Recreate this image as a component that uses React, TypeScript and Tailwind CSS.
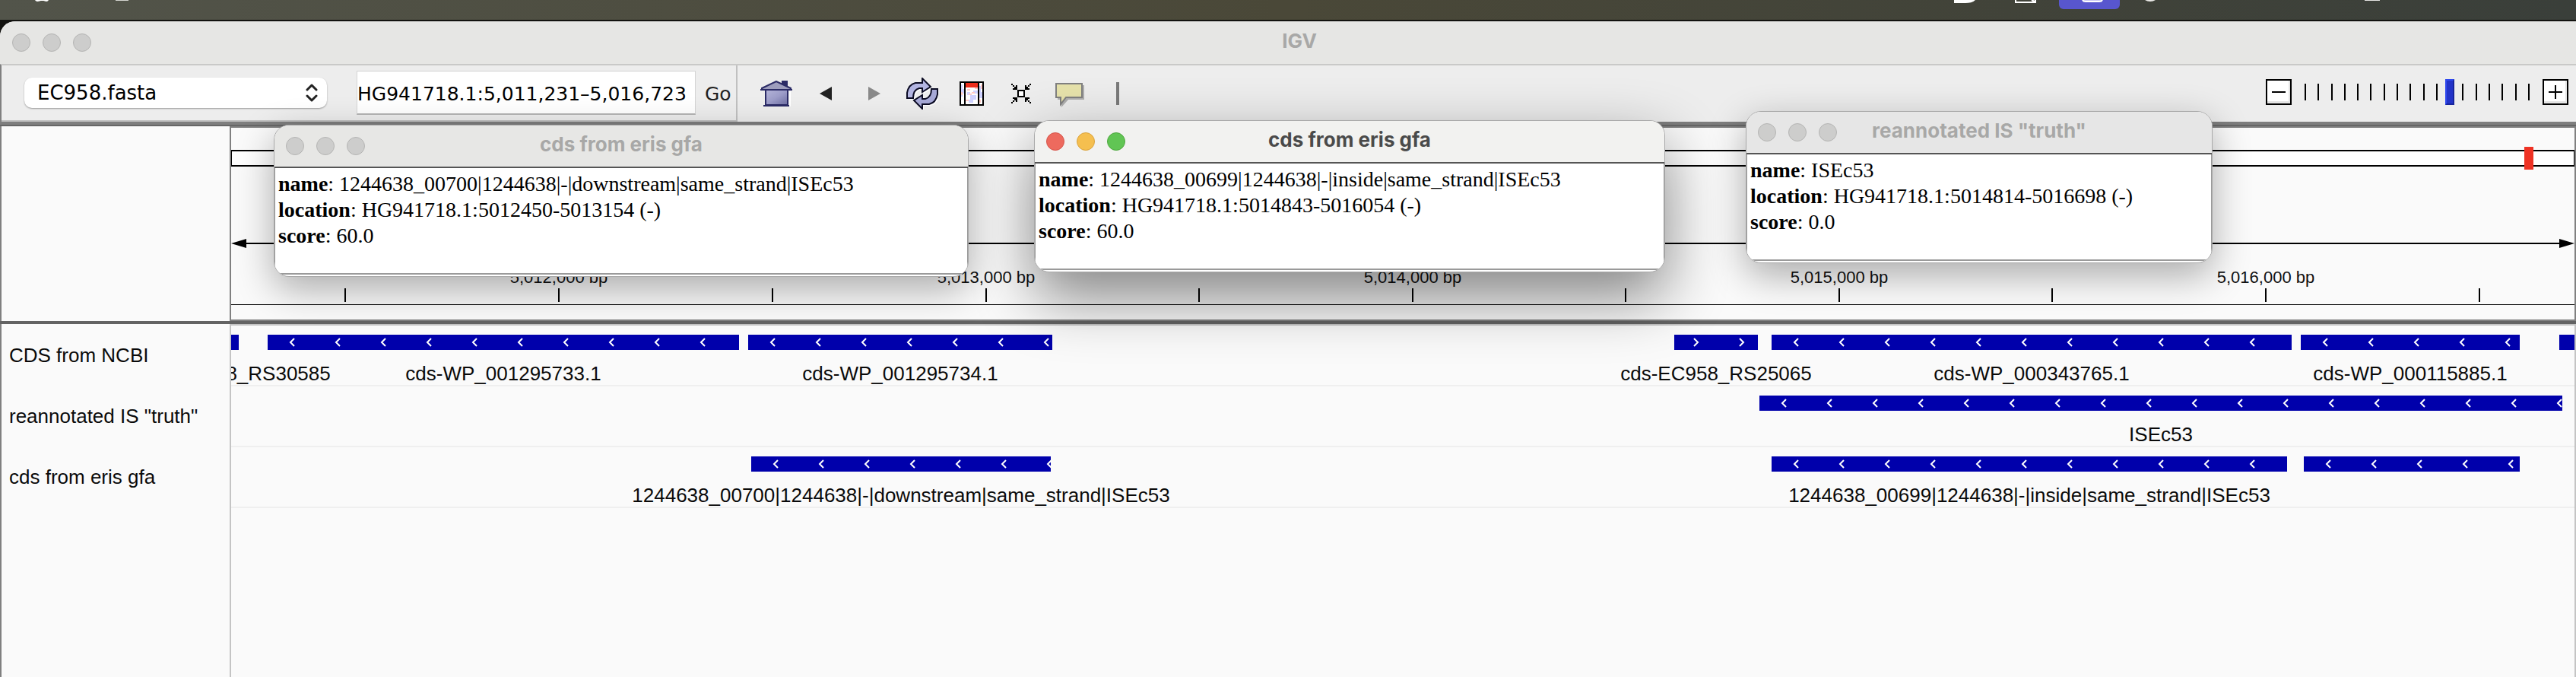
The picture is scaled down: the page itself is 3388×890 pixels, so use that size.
import React from "react";

const AXIS_WIDTH = 3082;
const pct = (value: number) => `${(value / AXIS_WIDTH) * 100}%`;

type Feature = { start: number; end: number; label?: string; forward?: boolean };

const TRACKS: { name: string; features: Feature[] }[] = [
  {
    name: "CDS from NCBI",
    features: [
      { start: 0, end: 10, label: "cds-EC958_RS30585" },
      { start: 48, end: 668, label: "cds-WP_001295733.1" },
      { start: 680, end: 1080, label: "cds-WP_001295734.1" },
      { start: 1898, end: 2008, label: "cds-EC958_RS25065", forward: true },
      { start: 2026, end: 2710, label: "cds-WP_000343765.1" },
      { start: 2722, end: 3010, label: "cds-WP_000115885.1" },
      { start: 3062, end: 3082 },
    ],
  },
  {
    name: 'reannotated IS "truth"',
    features: [{ start: 2010, end: 3066, label: "ISEc53" }],
  },
  {
    name: "cds from eris gfa",
    features: [
      { start: 684, end: 1078, label: "1244638_00700|1244638|-|downstream|same_strand|ISEc53" },
      { start: 2026, end: 2704, label: "1244638_00699|1244638|-|inside|same_strand|ISEc53" },
      { start: 2726, end: 3010 },
    ],
  },
];

const RULER: { at: number; label?: string }[] = [
  { at: 150 },
  { at: 431, label: "5,012,000 bp" },
  { at: 712 },
  { at: 993, label: "5,013,000 bp" },
  { at: 1273 },
  { at: 1554, label: "5,014,000 bp" },
  { at: 1834 },
  { at: 2115, label: "5,015,000 bp" },
  { at: 2395 },
  { at: 2676, label: "5,016,000 bp" },
  { at: 2957 },
];

function TrafficLights({ active = false }: { active?: boolean }) {
  const idle = "bg-[#cdcdcc] border-[#b4b4b3]";
  const tones = active
    ? ["bg-[#ed6a5e] border-[#d5554a]", "bg-[#f5bf4f] border-[#d9a33d]", "bg-[#61c554] border-[#4fa73f]"]
    : [idle, idle, idle];
  const names = ["Close", "Minimise", "Zoom"];
  return (
    <div className="flex gap-4">
      {tones.map((tone, i) => (
        <button key={names[i]} type="button" aria-label={names[i]} className={`size-6 rounded-full border ${tone}`} />
      ))}
    </div>
  );
}

function MenuBar() {
  return (
    <header className="h-7 shrink-0 border-b-2 border-[#12120f] bg-linear-to-r from-[#52544a] via-[#4a4838] to-[#3a3f3a]">
      <svg className="block h-[26px] w-full" aria-hidden="true">
        <path d="M46 0h18c-1 2-3 2.500-5 1.500c-2-.6-5-.6-7 0c-3 1-5 .3-6-1.500z" fill="#fff" />
        <rect x="152" width="17" height="1" fill="#d5d5d0" />
        <path d="M2570 0h28c-3 3-8 4-13 4h-15z" fill="#fff" />
        <path d="M2651 0v3h26v-3M2672 0l4 2" fill="none" stroke="#fff" strokeWidth="2" />
        <path d="M2708 0h80v6a6 6 0 0 1-6 6h-68a6 6 0 0 1-6-6z" fill="#5856ce" />
        <path d="M2739 0q1 2 4 2h18q3 0 4-2" fill="#c9c6f2" stroke="#fff" strokeWidth="2" />
        <path d="M2821 0h14q-3 2-7 2t-7-2z" fill="#e9e9e6" />
        <rect x="3110" width="20" height="1" fill="#e5e5e2" />
      </svg>
    </header>
  );
}

function HomeIcon() {
  return (
    <svg width="42" height="34" viewBox="0 0 42 34" aria-hidden="true">
      <defs>
        <linearGradient id="wall" x1="0" y1="0" x2="1" y2="1">
          <stop offset="0" stopColor="#b4b4d8" />
          <stop offset="0.5" stopColor="#9c9cc8" />
          <stop offset="1" stopColor="#6e6ea2" />
        </linearGradient>
      </defs>
      <path d="M38 14v20h2V14z" fill="#fff" />
      <path d="M28 0h8v10h-8z" fill="#2b2b66" />
      <path d="M7 12h29v20H7z" fill="url(#wall)" stroke="#2b2b66" strokeWidth="2" />
      <path d="M21 1L2 10v2h38v-2z" fill="#9d9dbd" stroke="#2b2b66" strokeWidth="2" />
      <path d="M0 11h42v2H0zM4 32h34v2H4z" fill="#2b2b66" />
    </svg>
  );
}

function RefreshIcon() {
  const arrow = "M1 27V20Q3 9 12 7H21V1L32 12L21 19V14H17Q9 16 9 27Z";
  return (
    <svg width="42" height="42" viewBox="0 0 42 42" aria-hidden="true">
      <path d={arrow} fill="#fff" transform="translate(2 2)" />
      <path d={arrow} fill="#fff" transform="rotate(180 22 22)" />
      <path d={arrow} fill="#b3b5e2" stroke="#0c0c24" strokeWidth="2" />
      <path d={arrow} fill="#a6a8d6" stroke="#0c0c24" strokeWidth="2" transform="rotate(180 21 21)" />
    </svg>
  );
}

function RegionIcon() {
  return (
    <svg width="32" height="32" viewBox="0 0 32 32" shapeRendering="crispEdges" aria-hidden="true">
      <path d="M0 0h32v32H0z" fill="#fff" />
      <path d="M2 4h2v6h2v6H4v4H2zM26 6h2v8h2v8h-4zM10 14h4v4h-4zM14 18h8v6h-4v4h-6v-4h2zM18 12h6v4h-6z" fill="#cfd2ff" />
      <path d="M2 14h2v4H2zM10 10h4v2h-4zM16 14h4v2h-4v2h-4v-2h4zM28 4h2v6h-2zM20 8h4v2h-4zM8 24h4v2H8zM26 24h2v4h-2z" fill="#ffc9c4" />
      <path d="M8 2h16v6H8z" fill="#ee2d1b" />
      <path d="M0 0h32v32H0zM2 2v28h4V2zM8 2v28h16V2zM26 2v28h4V2z" fill="#000" fillRule="evenodd" />
    </svg>
  );
}

function FitIcon() {
  return (
    <svg width="26" height="26" viewBox="0 0 26 26" shapeRendering="crispEdges" aria-hidden="true">
      <path d="M9 9h8v8H9z" fill="#fff" stroke="#000" strokeWidth="2" />
      {[0, 90, 180, 270].map((turn) => (
        <path key={turn} d="M0 0h2v2h2v2h2V2h2v6H2V6h2V4H2V2H0z" transform={`rotate(${turn} 13 13)`} />
      ))}
    </svg>
  );
}

function CommentIcon() {
  return (
    <svg width="38" height="32" viewBox="0 0 38 32" aria-hidden="true">
      <path d="M3 3h35v19H17l-9 10v-10H3z" fill="#aeaeae" />
      <path d="M1 1h34v18H14l-7 9v-9H1z" fill="#e6e2ab" stroke="#808080" strokeWidth="2" />
    </svg>
  );
}

function ToolButton({ label, className, children }: { label: string; className: string; children: React.ReactNode }) {
  return (
    <button type="button" aria-label={label} className={`flex shrink-0 items-center justify-center ${className}`}>
      {children}
    </button>
  );
}

function ZoomBox({ label, children }: { label: string; children: React.ReactNode }) {
  return (
    <button
      type="button"
      aria-label={label}
      className="flex size-[34px] items-center justify-center border-2 border-black bg-white shadow-[inset_-2px_-3px_0_#e4e4e4]"
    >
      <svg width="18" height="18" viewBox="0 0 18 18" aria-hidden="true">
        {children}
      </svg>
    </button>
  );
}

function Toolbar() {
  return (
    <div className="flex h-[76px] shrink-0 items-stretch border-t-2 border-l-2 border-t-[#c9c9c8] border-l-[#808080] bg-[#ededed]">
      <div className="flex w-[968px] shrink-0 items-center border-r-2 border-b-2 border-[#c0c0c0] pl-[30px]">
        <div className="relative w-[398px]">
          <select
            aria-label="Genome"
            className="h-10 w-full appearance-none rounded-[10px] bg-white pl-[17px] font-['DejaVu_Sans',sans-serif] text-[26px] leading-10 text-black shadow-[0_1px_2px_rgba(0,0,0,0.35)]"
          >
            <option>EC958.fasta</option>
          </select>
          <svg className="pointer-events-none absolute top-2 right-3 h-6 w-4" viewBox="0 0 16 24" fill="none" stroke="#222" strokeWidth="3" strokeLinecap="round" strokeLinejoin="round" aria-hidden="true">
            <path d="M2 8l6-6 6 6M2 16l6 6 6-6" />
          </svg>
        </div>
        <input
          aria-label="Locus"
          defaultValue="HG941718.1:5,011,231–5,016,723"
          className="ml-[39px] h-[58px] w-[446px] border border-[#d4d4d4] border-b-2 border-b-[#b5b5b5] bg-white pt-1 font-['DejaVu_Sans',sans-serif] text-[25px] text-black"
        />
        <button type="button" className="ml-3 pt-1 font-['DejaVu_Sans',sans-serif] text-[25px] text-[#222]">
          Go
        </button>
      </div>
      <div className="flex items-center pl-[30px]">
        <ToolButton label="Home" className="w-[42px]"><HomeIcon /></ToolButton>
        <ToolButton label="Back" className="ml-9 w-4">
          <svg width="16" height="18" viewBox="0 0 16 18" aria-hidden="true"><path d="M16 0v18L0 9z" fill="#222" /></svg>
        </ToolButton>
        <ToolButton label="Forward" className="ml-12 w-4">
          <svg width="16" height="18" viewBox="0 0 16 18" aria-hidden="true"><path d="M0 0v18l16-9z" fill="#898989" /></svg>
        </ToolButton>
        <ToolButton label="Refresh" className="ml-[34px] w-[42px]"><RefreshIcon /></ToolButton>
        <ToolButton label="Define a region of interest" className="ml-7 w-8"><RegionIcon /></ToolButton>
        <ToolButton label="Resize tracks to fit" className="ml-9 w-[26px]"><FitIcon /></ToolButton>
        <ToolButton label="Popup text behaviour" className="ml-8 w-[38px] pt-1"><CommentIcon /></ToolButton>
        <div className="ml-[42px] h-[30px] w-1 bg-[#7a7a7a]" />
      </div>
      <div className="ml-auto flex items-center pr-2.5 pb-1">
        <ZoomBox label="Zoom out"><path d="M0 8h18v2H0z" /></ZoomBox>
        <div className="relative mx-3 flex h-[34px] w-[306px] items-center">
          <div className="flex h-[22px] w-full justify-between px-[5px]">
            {Array.from({ length: 18 }, (_, i) => (
              <span key={i} className="w-0.5 bg-black" />
            ))}
          </div>
          <input
            type="range"
            aria-label="Zoom level"
            min={0}
            max={17}
            defaultValue={11}
            className="absolute inset-0 h-full w-full appearance-none bg-transparent [&::-webkit-slider-thumb]:h-[34px] [&::-webkit-slider-thumb]:w-3 [&::-webkit-slider-thumb]:appearance-none [&::-webkit-slider-thumb]:border-2 [&::-webkit-slider-thumb]:border-t-[#2f49ee] [&::-webkit-slider-thumb]:border-r-[#17249c] [&::-webkit-slider-thumb]:border-b-[#17249c] [&::-webkit-slider-thumb]:border-l-[#2f49ee] [&::-webkit-slider-thumb]:bg-[#2233c8]"
          />
        </div>
        <ZoomBox label="Zoom in"><path d="M0 8h8V0h2v8h8v2h-8v8H8v-8H0z" /></ZoomBox>
      </div>
    </div>
  );
}

function Ruler() {
  return (
    <div className="flex min-w-0 flex-1 flex-col border-2 border-[#808080] bg-[#fafafa] pt-[29px]">
      <div className="relative h-[22px] border-x border-y-2 border-black bg-white">
        <div className="absolute -top-1.5 h-[30px] w-3 bg-[#ee3224]" style={{ left: pct(3017) }} />
      </div>
      <div className="mt-[94px] flex h-3.5 items-center">
        <svg width="20" height="12" viewBox="0 0 20 12" aria-hidden="true"><path d="M0 6L20 0v12z" /></svg>
        <div className="h-0.5 flex-1 bg-black" />
        <svg width="20" height="12" viewBox="0 0 20 12" aria-hidden="true"><path d="M20 6L0 0v12z" /></svg>
      </div>
      <div className="relative mt-6 h-[50px] border-b border-black">
        {RULER.map((tick) => (
          <div key={tick.at} className="absolute top-0 flex h-[46px] w-0.5 flex-col items-center justify-end" style={{ left: pct(tick.at - 1) }}>
            <span className="text-[22px] leading-7 whitespace-nowrap text-[#111]">{tick.label}</span>
            <span className="h-[18px] w-0.5 bg-black" />
          </div>
        ))}
      </div>
    </div>
  );
}

function TrackRow({ features }: { features: Feature[] }) {
  return (
    <div className="relative h-20 overflow-hidden border-b-2 border-[#efefef]">
      {features.map((f) => (
        <div
          key={f.start}
          className="absolute top-3 flex flex-col items-center"
          style={{ left: pct(f.start), width: pct(f.end - f.start) }}
        >
          <svg className="block h-5 w-full bg-[#0000ab]" aria-hidden="true">
            <rect width="100%" height="20" fill={f.forward ? "url(#forward)" : "url(#reverse)"} />
          </svg>
          <span className="mt-[15px] text-[26px] leading-8 whitespace-nowrap text-[#0a0a0a]">{f.label}</span>
        </div>
      ))}
    </div>
  );
}

type PopupProps = { title: string; name: string; location: string; score: string; place: string; bar: string; active?: boolean };

function Popup({ title, name, location, score, place, bar, active }: PopupProps) {
  return (
    <section className={`absolute flex h-[200px] flex-col overflow-hidden rounded-[20px] border border-[#a9a9a9] bg-white ${place}`}>
      <div className={`relative flex h-14 shrink-0 items-center border-b-2 border-[#555] pl-[15px] ${bar}`}>
        <TrafficLights active={active} />
        <h2 className={`pointer-events-none absolute inset-x-0 pb-1 text-center font-['Inter',sans-serif] text-[26px] leading-8 font-bold ${active ? "text-[#4a4a4a]" : "text-[#a8a8a7]"}`}>
          {title}
        </h2>
      </div>
      <div className="mb-0.5 flex-1 border-x border-b-2 border-[#9a9a9a] bg-white pt-1 pl-1 font-['Liberation_Serif',serif] text-[28px] leading-[34px] text-black">
        <p><b>name</b>: {name}</p>
        <p><b>location</b>: {location}</p>
        <p><b>score</b>: {score}</p>
      </div>
    </section>
  );
}

export default function App() {
  return (
    <div className="relative flex min-h-screen w-full flex-col overflow-hidden bg-[#12120f] font-['Liberation_Sans',sans-serif]">
      <svg className="absolute size-0" aria-hidden="true">
        <defs>
          <pattern id="reverse" width="60" height="20" patternUnits="userSpaceOnUse">
            <path d="M35 5l-5 5 5 5" fill="none" stroke="#fff" strokeWidth="2" />
          </pattern>
          <pattern id="forward" width="60" height="20" patternUnits="userSpaceOnUse">
            <path d="M26 5l5 5-5 5" fill="none" stroke="#fff" strokeWidth="2" />
          </pattern>
        </defs>
      </svg>
      <MenuBar />
      <main className="flex flex-1 flex-col overflow-hidden rounded-tl-[20px] bg-[#fafafa]">
        <div className="relative flex h-14 shrink-0 items-center bg-[#e6e6e4] pl-4">
          <TrafficLights />
          <h1 className="pointer-events-none absolute inset-x-0 pb-1 pl-[30px] text-center font-['Inter',sans-serif] text-[26px] leading-8 font-bold text-[#a8a8a7]">IGV</h1>
        </div>
        <Toolbar />
        <div className="h-1.5 shrink-0 border-b-2 border-[#666] bg-[#7e7e7e]" />
        <div className="flex h-64 shrink-0">
          <div className="w-[302px] shrink-0 border-l-2 border-[#808080] bg-[#fafafa]" />
          <Ruler />
        </div>
        <div className="h-1 shrink-0 bg-[#636363]" />
        <div className="flex flex-1">
          <div className="w-[302px] shrink-0 border-l-2 border-[#808080] pt-px">
            {TRACKS.map((track) => (
              <div key={track.name} className="flex h-20 items-center pl-2.5 text-[26px] whitespace-nowrap text-[#0a0a0a]">
                {track.name}
              </div>
            ))}
          </div>
          <div className="min-w-0 flex-1 border-x-2 border-t-2 border-[#c4c4c4]">
            {TRACKS.map((track) => (
              <TrackRow key={track.name} features={track.features} />
            ))}
          </div>
        </div>
      </main>
      <Popup
        title="cds from eris gfa"
        name="1244638_00700|1244638|-|downstream|same_strand|ISEc53"
        location="HG941718.1:5012450-5013154 (-)"
        score="60.0"
        place="top-[164px] left-[360px] w-[914px] shadow-[0_16px_50px_rgba(0,0,0,0.32)]"
        bar="bg-[#e7e7e5]"
      />
      <Popup
        title={'reannotated IS "truth"'}
        name="ISEc53"
        location="HG941718.1:5014814-5016698 (-)"
        score="0.0"
        place="top-[146px] left-[2296px] w-[614px] shadow-[0_16px_50px_rgba(0,0,0,0.32)]"
        bar="bg-[#e6e6e6]"
      />
      <Popup
        title="cds from eris gfa"
        name="1244638_00699|1244638|-|inside|same_strand|ISEc53"
        location="HG941718.1:5014843-5016054 (-)"
        score="60.0"
        place="top-[158px] left-[1360px] w-[830px] shadow-[0_32px_80px_rgba(0,0,0,0.48)]"
        bar="bg-[#f2f2f0]"
        active
      />
    </div>
  );
}
